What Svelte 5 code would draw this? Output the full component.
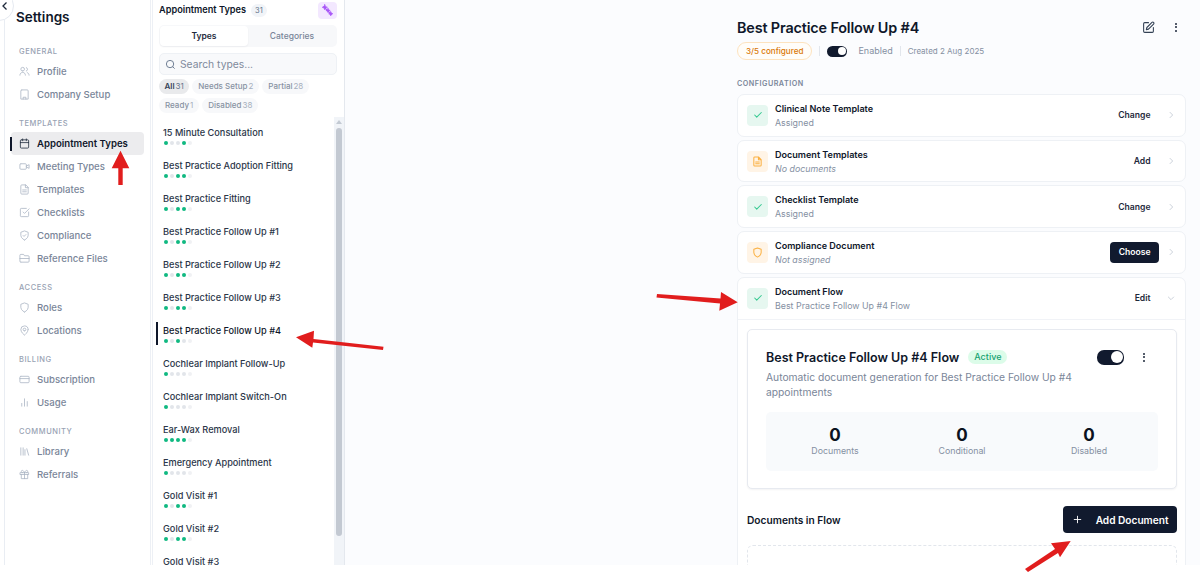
<script>
  // Settings page: nav rail, appointment type list, and the detail column.
  // The red arrows are annotations that sit on top of the screenshot.
  const groups = [
    { label: 'General', items: [['Profile', 'users'], ['Company Setup', 'building']] },
    {
      label: 'Templates',
      items: [
        ['Appointment Types', 'calendar'],
        ['Meeting Types', 'video'],
        ['Templates', 'file'],
        ['Checklists', 'check'],
        ['Compliance', 'shieldcheck'],
        ['Reference Files', 'folder']
      ]
    },
    { label: 'Access', items: [['Roles', 'shield'], ['Locations', 'pin']] },
    { label: 'Billing', items: [['Subscription', 'card'], ['Usage', 'bars']] },
    { label: 'Community', items: [['Library', 'library'], ['Referrals', 'gift']] }
  ];

  const icons = {
    users: 'M2 20c0-3.5 2.5-6 6-6s6 2.500 6 6M8 11a4 4 0 1 0 0-8 4 4 0 0 0 0 8M16 3.500a4 4 0 0 1 0 7.500M18 14.500c2.500.7 4 2.800 4 5.500',
    building: 'M6 2h12a2 2 0 0 1 2 2v18H4V4a2 2 0 0 1 2-2M9 22v-4h6v4',
    calendar: 'M5 4h14a2 2 0 0 1 2 2v14a2 2 0 0 1-2 2H5a2 2 0 0 1-2-2V6a2 2 0 0 1 2-2M16 2v4M8 2v4M3 10h18',
    video: 'M4 6h10a2 2 0 0 1 2 2v8a2 2 0 0 1-2 2H4a2 2 0 0 1-2-2V8a2 2 0 0 1 2-2M16 11l6-3v8l-6-3',
    file: 'M14 2H6a2 2 0 0 0-2 2v16a2 2 0 0 0 2 2h12a2 2 0 0 0 2-2V8zM14 2v6h6M8 13h8M8 17h8',
    check: 'M21 11v8a2 2 0 0 1-2 2H5a2 2 0 0 1-2-2V5a2 2 0 0 1 2-2h11M9 11l3 3L22 4',
    shieldcheck: 'M12 22s8-4 8-10V5l-8-3-8 3v7c0 6 8 10 8 10M9 12l2 2 4-4',
    folder: 'M4 20h16a2 2 0 0 0 2-2V8a2 2 0 0 0-2-2h-8L10 3H4a2 2 0 0 0-2 2v13a2 2 0 0 0 2 2M2 12h20',
    shield: 'M12 22s8-4 8-10V5l-8-3-8 3v7c0 6 8 10 8 10',
    pin: 'M20 10c0 6-8 12-8 12s-8-6-8-12a8 8 0 0 1 16 0M12 13a3 3 0 1 0 0-6 3 3 0 0 0 0 6',
    card: 'M4 5h16a2 2 0 0 1 2 2v10a2 2 0 0 1-2 2H4a2 2 0 0 1-2-2V7a2 2 0 0 1 2-2M2 10h20',
    bars: 'M18 20V10M12 20V4M6 20v-6',
    library: 'M4 20V4M9 20V4M13 20V8M17 6l4 14',
    gift: 'M3 8h18v4H3zM5 12v9h14v-9M12 8v13M12 8S10 3 7.500 3a2.500 2.500 0 0 0 0 5M12 8s2-5 4.500-5a2.500 2.500 0 0 1 0 5'
  };

  // 1 = green dot, 0 = grey dot, in the five status positions
  const types = [
    ['15 Minute Consultation', [1, 0, 0, 1, 0]],
    ['Best Practice Adoption Fitting', [1, 0, 1, 1, 0]],
    ['Best Practice Fitting', [1, 0, 1, 1, 0]],
    ['Best Practice Follow Up #1', [1, 0, 1, 1, 0]],
    ['Best Practice Follow Up #2', [1, 0, 1, 1, 0]],
    ['Best Practice Follow Up #3', [1, 0, 1, 1, 0]],
    ['Best Practice Follow Up #4', [1, 0, 1, 0, 0]],
    ['Cochlear Implant Follow-Up', [1, 0, 0, 0, 0]],
    ['Cochlear Implant Switch-On', [1, 0, 0, 0, 0]],
    ['Ear-Wax Removal', [1, 1, 1, 1, 0]],
    ['Emergency Appointment', [1, 0, 0, 0, 0]],
    ['Gold Visit #1', [1, 0, 1, 1, 0]],
    ['Gold Visit #2', [1, 0, 1, 1, 0]],
    ['Gold Visit #3', [1, 0, 1, 1, 0]]
  ];

  const filters = [
    ['All', 31, true],
    ['Needs Setup', 2],
    ['Partial', 28],
    ['Ready', 1],
    ['Disabled', 38]
  ];

  const config = [
    { name: 'Clinical Note Template', sub: 'Assigned', ok: true, action: 'Change' },
    { name: 'Document Templates', sub: 'No documents', icon: 'doc', action: 'Add' },
    { name: 'Checklist Template', sub: 'Assigned', ok: true, action: 'Change' },
    { name: 'Compliance Document', sub: 'Not assigned', icon: 'shield', action: 'Choose' }
  ];

  const stats = ['Documents', 'Conditional', 'Disabled'];
</script>

<div class="shot">
  <div class="page">
    <div class="gutter"></div>

    <nav class="rail">
      <button class="back" aria-label="Back">
        <svg width="8" height="10" viewBox="0 0 8 10"><path d="M5.500 1.500 2 5l3.500 3.500" /></svg>
      </button>
      <h1>Settings</h1>
      {#each groups as group}
        <div class="group">
          <div class="group-label">{group.label}</div>
          {#each group.items as [name, icon]}
            <div class="nav-item" class:active={name === 'Appointment Types'}>
              <svg class="nav-icon" viewBox="0 0 24 24"><path d={icons[icon]} /></svg>
              <span>{name}</span>
            </div>
          {/each}
        </div>
      {/each}
    </nav>

    <section class="types">
      <div class="types-head">
        <h2>Appointment Types</h2>
        <span class="count">31</span>
        <span class="magic">
          <svg width="13" height="13" viewBox="0 0 24 24">
            <path d="M5 5 19 19" />
            <path class="spark" d="M7 1l1.500 3.500L12 6 8.500 7.500 7 11 5.500 7.500 2 6l3.500-1.500zM13 8l1.300 2.700L17 12l-2.700 1.300L13 16l-1.300-2.700L9 12l2.700-1.300zM18 14l1.300 2.700L22 18l-2.700 1.300L18 22l-1.300-2.700L14 18l2.700-1.300z" />
          </svg>
        </span>
      </div>

      <div class="tabs">
        <div class="tab on">Types</div>
        <div class="tab">Categories</div>
      </div>

      <div class="search">
        <svg width="11" height="11" viewBox="0 0 24 24"><circle cx="11" cy="11" r="8" /><path d="m21 21-4.300-4.300" /></svg>
        <span>Search types...</span>
      </div>

      <div class="filters">
        {#each filters as [label, n, on]}
          <span class="chip" class:on>{label}<em>{n}</em></span>
        {/each}
      </div>

      <div class="list-wrap">
        <div class="list">
          {#each types as [name, dots]}
            <div class="type" class:current={name === 'Best Practice Follow Up #4'}>
              <div class="type-name">{name}</div>
              <div class="dots">
                {#each dots as d, i}
                  <i class:green={d} class:last={i === 4}></i>
                {/each}
              </div>
            </div>
          {/each}
        </div>
        <div class="scrollbar">
          <span class="up"></span>
          <span class="thumb"></span>
        </div>
      </div>
    </section>

    <main class="detail">
      <div class="column">
        <header class="title-row">
          <h2>Best Practice Follow Up #4</h2>
          <div class="title-actions">
            <svg width="13" height="13" viewBox="0 0 24 24">
              <path d="M12 3H5a2 2 0 0 0-2 2v14a2 2 0 0 0 2 2h14a2 2 0 0 0 2-2v-7M18.400 2.600a2.100 2.100 0 1 1 3 3L12 15l-4 1 1-4z" />
            </svg>
            <span class="kebab"><b></b><b></b><b></b></span>
          </div>
        </header>

        <div class="meta">
          <span class="configured">3/5 configured</span>
          <span class="sep"></span>
          <span class="toggle small"><i></i></span>
          <span class="enabled">Enabled</span>
          <span class="sep"></span>
          <span class="created">Created 2 Aug 2025</span>
        </div>

        <div class="section-label">Configuration</div>

        <div class="cards">
          {#each config as c}
            <div class="card">
              <span class="badge" class:ok={c.ok}>
                {#if c.ok}
                  <svg width="10" height="10" viewBox="0 0 24 24"><path d="M20 6 9 17l-5-5" /></svg>
                {:else if c.icon === 'doc'}
                  <svg width="11" height="11" viewBox="0 0 24 24"><path d={icons.file} /></svg>
                {:else}
                  <svg width="11" height="11" viewBox="0 0 24 24"><path d={icons.shield} /></svg>
                {/if}
              </span>
              <div class="card-text">
                <div class="card-name">{c.name}</div>
                <div class="card-sub" class:missing={!c.ok}>{c.sub}</div>
              </div>
              <span class="action" class:primary={c.action === 'Choose'}>{c.action}</span>
              <svg class="chev" width="10" height="10" viewBox="0 0 24 24"><path d="m9 5 7 7-7 7" /></svg>
            </div>
          {/each}

          <div class="card open">
            <div class="open-head">
              <span class="badge ok">
                <svg width="10" height="10" viewBox="0 0 24 24"><path d="M20 6 9 17l-5-5" /></svg>
              </span>
              <div class="card-text">
                <div class="card-name">Document Flow</div>
                <div class="card-sub">Best Practice Follow Up #4 Flow</div>
              </div>
              <span class="action">Edit</span>
              <svg class="chev" width="10" height="10" viewBox="0 0 24 24"><path d="m5 9 7 7 7-7" /></svg>
            </div>

            <div class="open-body">
              <div class="flow">
                <div class="flow-head">
                  <div class="flow-title">
                    <h3>Best Practice Follow Up #4 Flow</h3>
                    <span class="active-pill">Active</span>
                  </div>
                  <span class="toggle"><i></i></span>
                  <span class="kebab"><b></b><b></b><b></b></span>
                </div>
                <p>Automatic document generation for Best Practice Follow Up #4 appointments</p>
                <div class="stats">
                  {#each stats as s}
                    <div class="stat"><strong>0</strong><span>{s}</span></div>
                  {/each}
                </div>
              </div>

              <div class="docs-head">
                <h4>Documents in Flow</h4>
                <span class="add">
                  <svg width="11" height="11" viewBox="0 0 24 24"><path d="M12 4v16M4 12h16" /></svg>
                  Add Document
                </span>
              </div>
              <div class="dropzone"></div>
            </div>
          </div>
        </div>
      </div>
    </main>
  </div>

  <svg class="arrows" width="1200" height="572" viewBox="0 0 1200 572" aria-hidden="true">
    <path d="M118.300 185V168.300H111.700L120.500 150.700 129.300 168.300H122.700V185Z" />
    <path d="M296 337.300 314 330.700 313.500 339 383.500 346.700 383 350 313 342.500 312.300 347.700Z" />
    <path d="M657 294 720.500 298.500 721 292 737.700 302.300 719.300 310.700 720 303.500 656.500 297.500Z" />
    <path d="M1070.700 541 1051 543.300 1055 549 1025 569 1028 572 1058 553 1060 557.300Z" />
  </svg>
</div>

<style>
  :global(body) {
    background: #fff;
  }
  .shot {
    position: relative;
    width: 1200px;
    height: 572px;
    overflow: hidden;
  }
  .page {
    display: flex;
    height: 565px;
    width: 1200px;
    overflow: hidden;
    font-family: Inter, "Liberation Sans", sans-serif;
    color: #0f172a;
    background: #fff;
  }
  h1, h2, h3, h4, p {
    margin: 0;
  }
  .gutter {
    width: 4px;
    border-right: 1px solid #e9edf3;
    flex: none;
  }

  /* nav rail */
  .rail {
    width: 146px;
    flex: none;
    box-sizing: border-box;
    padding: 8px 6px 0 6px;
    border-right: 1px solid #edf0f5;
    position: relative;
  }
  .back {
    position: absolute;
    left: -21px;
    top: -9px;
    width: 30px;
    height: 30px;
    padding: 0 0 0 12px;
    border-radius: 50%;
    border: 1px solid #e5e9f0;
    background: #fff;
    display: flex;
    align-items: center;
    justify-content: center;
  }
  .back svg {
    fill: none;
    stroke: #1e293b;
    stroke-width: 1.300;
  }
  h1 {
    font-size: 13.500px;
    line-height: 18px;
    font-weight: 600;
    padding-left: 5px;
  }
  .group {
    margin-top: 12.500px;
  }
  .group:first-of-type {
    margin-top: 20px;
  }
  .group-label {
    font-size: 7.500px;
    line-height: 12px;
    font-weight: 500;
    letter-spacing: 0.55px;
    text-transform: uppercase;
    color: #98a2b3;
    padding-left: 8px;
    margin-bottom: 1.500px;
  }
  .nav-item {
    display: flex;
    align-items: center;
    gap: 7px;
    height: 23px;
    padding-left: 8px;
    font-size: 9.600px;
    font-weight: 500;
    color: #7a8699;
    border-radius: 4px;
    position: relative;
  }
  .nav-icon {
    fill: none;
    stroke: #a9b3c2;
    stroke-width: 1.700;
    stroke-linecap: round;
    stroke-linejoin: round;
    flex: none;
    width: 11px;
    height: 11px;
  }
  .nav-item.active {
    background: #ececee;
    color: #0f172a;
    font-weight: 600;
  }
  .nav-item.active .nav-icon {
    stroke: #1e293b;
  }
  .nav-item.active::before {
    content: "";
    position: absolute;
    left: -1px;
    top: 5px;
    bottom: 4px;
    width: 1.500px;
    background: #0f172a;
  }

  /* type list */
  .types {
    width: 193px;
    flex: none;
    box-sizing: border-box;
    border-right: 1px solid #e4e8ee;
    display: flex;
    flex-direction: column;
    min-height: 0;
    margin-left: 1px;
    border-left: 1px solid #edf0f5;
  }
  .types-head {
    display: flex;
    align-items: center;
    padding: 0 7px 0 6px;
    height: 19px;
    gap: 5px;
  }
  .types-head h2 {
    font-size: 9.200px;
    font-weight: 600;
  }
  .count {
    font-size: 7.500px;
    color: #64748b;
    background: #f1f4f8;
    border-radius: 7px;
    padding: 2px 4px;
    line-height: 9px;
    margin-top: 1px;
  }
  .magic {
    margin-left: auto;
    margin-top: 2px;
    width: 19px;
    height: 17px;
    border-radius: 4px;
    background: #f3e8ff;
    display: flex;
    align-items: center;
    justify-content: center;
  }
  .magic svg {
    fill: none;
    stroke: #a855f7;
    stroke-width: 2;
    stroke-linecap: round;
  }
  .magic .spark {
    fill: #a855f7;
    stroke-width: 1;
  }
  .tabs {
    display: flex;
    margin: 6px 7px 0 6px;
    height: 22px;
    padding: 1px;
    background: #f7f8fa;
    border-radius: 5px;
    box-sizing: border-box;
  }
  .tab {
    flex: 1;
    display: flex;
    align-items: center;
    justify-content: center;
    font-size: 8.500px;
    font-weight: 500;
    color: #7a8699;
    border-radius: 4px;
  }
  .tab.on {
    background: #fff;
    color: #1e293b;
    font-weight: 600;
    box-shadow: 0 1px 2px rgba(15, 23, 42, 0.05);
  }
  .search {
    display: flex;
    align-items: center;
    gap: 4px;
    margin: 6px 7px 0 6px;
    height: 22px;
    padding-left: 5px;
    background: #f8f9fb;
    border: 1px solid #eef1f5;
    border-radius: 5px;
    box-sizing: border-box;
    font-size: 10.300px;
    color: #7f8a9b;
  }
  .search svg {
    fill: none;
    stroke: #64748b;
    stroke-width: 2;
  }
  .filters {
    display: flex;
    flex-wrap: wrap;
    gap: 3.500px 3px;
    margin: 4px 7px 0 6px;
  }
  .chip {
    font-size: 8px;
    line-height: 15px;
    height: 15px;
    padding: 0 6px;
    border-radius: 8px;
    background: #f7f8fa;
    color: #8792a2;
    font-weight: 500;
  }
  .chip em {
    font-style: normal;
    font-weight: 400;
    color: #a6afbc;
    margin-left: 1px;
  }
  .chip.on {
    background: #e9eaec;
    color: #334155;
    font-weight: 600;
    padding: 0 5.500px;
  }
  .chip.on em {
    color: #64748b;
  }
  .list-wrap {
    display: flex;
    flex: 1;
    min-height: 0;
    margin-top: 4.500px;
    overflow: hidden;
  }
  .list {
    flex: 1;
    min-width: 0;
    padding: 8px 0 0 3px;
  }
  .type {
    height: 33px;
    box-sizing: border-box;
    padding: 2px 0 0 7px;
    position: relative;
  }
  .type-name {
    font-size: 9.200px;
    line-height: 12px;
    font-weight: 500;
    color: #2b3648;
  }
  .type.current .type-name {
    color: #0f172a;
  }
  .type.current::before {
    content: "";
    position: absolute;
    left: 0;
    top: -1px;
    height: 23px;
    width: 1.500px;
    background: #0f172a;
  }
  .dots {
    display: flex;
    gap: 2px;
    margin-top: 2px;
    padding-left: 0.500px;
  }
  .dots i {
    width: 4px;
    height: 4px;
    border-radius: 50%;
    background: #e2e5ea;
  }
  .dots i.last {
    background: #f0f1f4;
  }
  .dots i.green {
    background: #10b981;
  }
  .scrollbar {
    width: 10px;
    flex: none;
    background: #f1f4f8;
    display: flex;
    flex-direction: column;
    align-items: center;
    padding-top: 3px;
  }
  .up {
    width: 0;
    height: 0;
    border-left: 3px solid transparent;
    border-right: 3px solid transparent;
    border-bottom: 4px solid #c3cad3;
  }
  .thumb {
    width: 5.500px;
    height: 408px;
    margin-top: 4px;
    border-radius: 3px;
    background: #c3c9d2;
  }

  /* detail column */
  .detail {
    flex: 1;
    min-width: 0;
    background: #fbfcfe;
    display: flex;
    justify-content: flex-end;
    padding-right: 14px;
  }
  .column {
    width: 449px;
    padding-top: 17px;
  }
  .title-row {
    display: flex;
    align-items: center;
    justify-content: space-between;
    height: 20px;
  }
  .title-row h2 {
    font-size: 14.400px;
    font-weight: 600;
    letter-spacing: -0.15px;
  }
  .title-actions {
    display: flex;
    align-items: center;
    gap: 20px;
    margin-right: 9px;
  }
  .title-actions svg {
    fill: none;
    stroke: #334155;
    stroke-width: 2;
    stroke-linecap: round;
    stroke-linejoin: round;
  }
  .kebab {
    display: inline-flex;
    flex-direction: column;
    gap: 1.500px;
    width: 2px;
  }
  .kebab b {
    width: 2px;
    height: 2px;
    border-radius: 50%;
    background: #1e293b;
  }
  .meta {
    display: flex;
    align-items: center;
    height: 18px;
    margin-top: 5px;
    font-size: 9px;
    color: #8590a2;
  }
  .configured {
    font-size: 8.100px;
    font-weight: 500;
    color: #d97706;
    background: #fffdf9;
    border: 1px solid #fde3bf;
    border-radius: 9px;
    line-height: 16px;
    padding: 0 8px;
  }
  .sep {
    width: 1px;
    height: 10px;
    background: #e2e6ec;
    margin: 0 7px;
  }
  .toggle {
    width: 26px;
    height: 13px;
    border-radius: 7px;
    background: #111a2e;
    display: inline-flex;
    align-items: center;
    justify-content: flex-end;
    padding-right: 1.500px;
    box-sizing: border-box;
    flex: none;
  }
  .toggle i {
    width: 10px;
    height: 10px;
    border-radius: 50%;
    background: #fff;
  }
  .toggle.small {
    width: 20px;
    height: 11px;
    margin-right: 11px;
  }
  .toggle.small i {
    width: 8px;
    height: 8px;
  }
  .enabled {
    margin-top: -2px;
  }
  .created {
    font-size: 8px;
  }
  .section-label {
    margin-top: 19px;
    font-size: 7.200px;
    line-height: 10px;
    letter-spacing: 0.5px;
    font-weight: 600;
    text-transform: uppercase;
    color: #7a8699;
  }
  .cards {
    display: flex;
    flex-direction: column;
    gap: 3px;
    margin-top: 5px;
  }
  .card {
    display: flex;
    align-items: center;
    height: 42.700px;
    box-sizing: border-box;
    padding: 0 9px;
    background: #fff;
    border: 1px solid #eef1f5;
    border-radius: 7px;
  }
  .badge {
    width: 21px;
    height: 21px;
    border-radius: 4px;
    background: #fff4e6;
    display: flex;
    align-items: center;
    justify-content: center;
    flex: none;
    margin-right: 7px;
  }
  .badge svg {
    fill: none;
    stroke: #fbb040;
    stroke-width: 2.200;
    stroke-linecap: round;
    stroke-linejoin: round;
  }
  .badge.ok {
    background: #e6f7f0;
  }
  .badge.ok svg {
    stroke: #34c990;
    stroke-width: 2.500;
  }
  .card-text {
    flex: 1;
    min-width: 0;
  }
  .card-name {
    font-size: 9.050px;
    line-height: 13px;
    font-weight: 600;
  }
  .card-sub {
    font-size: 8.850px;
    line-height: 13px;
    margin-top: 1px;
    color: #8590a2;
  }
  .card-sub.missing {
    font-style: italic;
  }
  .action {
    font-size: 8.600px;
    font-weight: 600;
    color: #1e293b;
    margin-right: 15.500px;
  }
  .action.primary {
    background: #111a2e;
    color: #fff;
    border-radius: 4px;
    padding: 0 8.500px;
    line-height: 21px;
    margin-right: 7px;
  }
  .chev {
    fill: none;
    stroke: #c2c9d3;
    stroke-width: 2;
    flex: none;
  }
  .card.open {
    display: block;
    height: auto;
    padding: 0;
  }
  .open-head {
    display: flex;
    align-items: center;
    height: 42px;
    padding: 0 9px;
    border-bottom: 1px solid #f1f3f7;
    box-sizing: border-box;
  }
  .open-body {
    padding: 9.700px 8px 0 9px;
  }
  .flow {
    border: 1px solid #e7eaf0;
    border-radius: 5px;
    background: #fff;
    padding: 19px 18px 0;
    box-shadow: 0 1px 2px rgba(15, 23, 42, 0.05);
    height: 160px;
    box-sizing: border-box;
  }
  .flow-head {
    display: flex;
    align-items: center;
    height: 16px;
  }
  .flow-title {
    flex: 1;
    display: flex;
    align-items: center;
    gap: 9px;
  }
  .flow-head h3 {
    font-size: 12.500px;
    font-weight: 600;
  }
  .flow-head .toggle {
    width: 27px;
    height: 15px;
    margin-right: 19px;
  }
  .flow-head .toggle i {
    width: 12px;
    height: 12px;
  }
  .flow-head .kebab {
    margin-right: 13px;
  }
  .active-pill {
    font-size: 9px;
    line-height: 14px;
    padding: 0 6px;
    border-radius: 7px;
    font-weight: 500;
    color: #16a371;
    background: #dcfce9;
  }
  .flow p {
    font-size: 10.270px;
    line-height: 15px;
    color: #7a8699;
    margin-top: 5px;
    width: 330px;
  }
  .stats {
    display: grid;
    grid-template-columns: repeat(3, 1fr);
    background: #f8fafc;
    border-radius: 5px;
    height: 59px;
    margin-top: 12px;
    padding: 0 5.500px;
  }
  .stat {
    display: flex;
    flex-direction: column;
    align-items: center;
    justify-content: center;
    gap: 1px;
  }
  .stat strong {
    font-size: 17px;
    line-height: 18px;
    font-weight: 700;
    color: #0b1220;
  }
  .stat span {
    font-size: 8.800px;
    line-height: 12px;
    color: #8590a2;
  }
  .docs-head {
    display: flex;
    align-items: center;
    justify-content: space-between;
    margin-top: 17px;
  }
  .docs-head h4 {
    font-size: 10.200px;
    font-weight: 600;
  }
  .add {
    display: flex;
    align-items: center;
    gap: 13px;
    height: 27px;
    padding: 0 8.500px;
    background: #111a2e;
    color: #fff;
    border-radius: 4px;
    font-size: 10.150px;
    font-weight: 600;
    box-sizing: border-box;
  }
  .add svg {
    fill: none;
    stroke: #fff;
    stroke-width: 2;
  }
  .dropzone {
    margin-top: 12px;
    height: 60px;
    border: 1px dashed #e2e6ec;
    border-radius: 6px;
  }

  /* annotations drawn over the page */
  .arrows {
    position: absolute;
    inset: 0;
    pointer-events: none;
  }
  .arrows path {
    fill: #e11d1d;
  }
</style>
